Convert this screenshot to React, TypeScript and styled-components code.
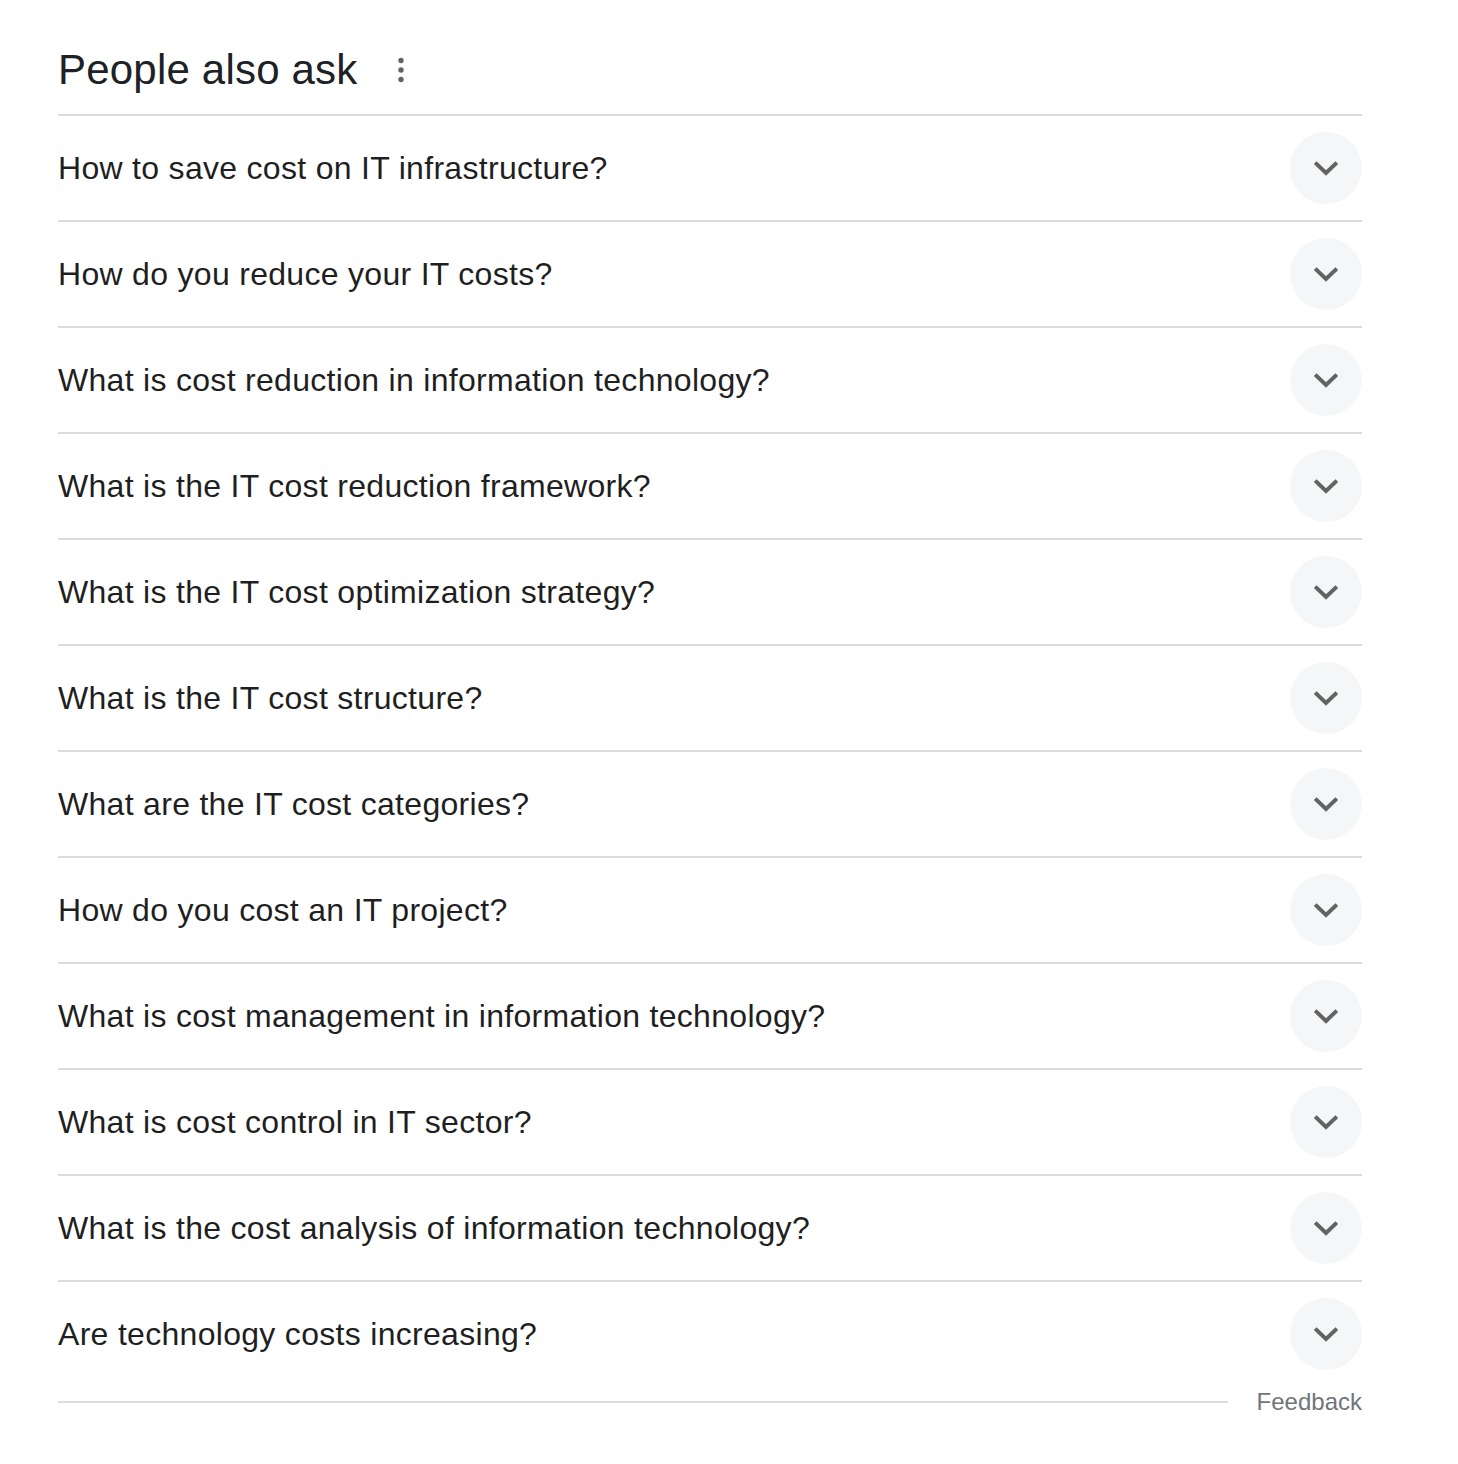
import React from "react";
import styled, { createGlobalStyle } from "styled-components";

const GlobalStyle = createGlobalStyle`
  html, body {
    margin: 0;
    padding: 0;
    background: #ffffff;
  }
  body {
    font-family: "Liberation Sans", Arial, sans-serif;
    color: #202124;
  }
`;

const Page = styled.div`
  width: 1458px;
  min-height: 1464px;
  box-sizing: border-box;
  padding: 0 96px 0 58px;
`;

const Section = styled.section`
  width: 1304px;
`;

const Header = styled.div`
  display: flex;
  align-items: center;
  gap: 38px;
  height: 70px;
  padding: 35px 0 9px;
`;

const Title = styled.h2`
  margin: 0;
  font-size: 42px;
  line-height: 52px;
  font-weight: 400;
  color: #202124;
  letter-spacing: 0.2px;
`;

const MoreButton = styled.div`
  display: flex;
  align-items: center;
  justify-content: center;
  width: 10px;
  height: 30px;
  color: #5f6368;
`;

const List = styled.div`
  display: flex;
  flex-direction: column;
`;

const Row = styled.div`
  display: flex;
  align-items: center;
  justify-content: space-between;
  height: 104px;
  border-top: 2px solid #dadce0;
`;

const Question = styled.span`
  font-size: 32px;
  line-height: 40px;
  color: #1f1f1f;
  letter-spacing: 0.3px;
`;

const Toggle = styled.div`
  display: flex;
  align-items: center;
  justify-content: center;
  width: 72px;
  height: 72px;
  border-radius: 50%;
  background: #f5f6f7;
  color: #636363;
  flex-shrink: 0;
`;

const FeedbackRow = styled.div`
  display: flex;
  align-items: center;
  gap: 29px;
  height: 32px;
`;

const Rule = styled.div`
  flex: 1;
  height: 2px;
  background: #dadce0;
`;

const FeedbackLink = styled.span`
  font-size: 24px;
  line-height: 32px;
  color: #70757a;
`;

const questions = [
  "How to save cost on IT infrastructure?",
  "How do you reduce your IT costs?",
  "What is cost reduction in information technology?",
  "What is the IT cost reduction framework?",
  "What is the IT cost optimization strategy?",
  "What is the IT cost structure?",
  "What are the IT cost categories?",
  "How do you cost an IT project?",
  "What is cost management in information technology?",
  "What is cost control in IT sector?",
  "What is the cost analysis of information technology?",
  "Are technology costs increasing?",
];

const DotsIcon = () => (
  <svg width="10" height="30" viewBox="0 0 10 30" aria-hidden="true">
    <circle cx="5" cy="5.5" r="2.7" fill="currentColor" />
    <circle cx="5" cy="15" r="2.7" fill="currentColor" />
    <circle cx="5" cy="24.5" r="2.7" fill="currentColor" />
  </svg>
);

const ChevronIcon = () => (
  <svg width="26" height="16" viewBox="0 0 26 16" aria-hidden="true">
    <path
      d="M2.2 2.6 L13 13 L23.8 2.6"
      fill="none"
      stroke="currentColor"
      strokeWidth="4"
      strokeLinecap="butt"
      strokeLinejoin="miter"
    />
  </svg>
);

export default function App() {
  return (
    <>
      <GlobalStyle />
      <Page>
        <Section>
          <Header>
            <Title>People also ask</Title>
            <MoreButton>
              <DotsIcon />
            </MoreButton>
          </Header>
          <List>
            {questions.map((q) => (
              <Row key={q}>
                <Question>{q}</Question>
                <Toggle>
                  <ChevronIcon />
                </Toggle>
              </Row>
            ))}
          </List>
          <FeedbackRow>
            <Rule />
            <FeedbackLink>Feedback</FeedbackLink>
          </FeedbackRow>
        </Section>
      </Page>
    </>
  );
}
